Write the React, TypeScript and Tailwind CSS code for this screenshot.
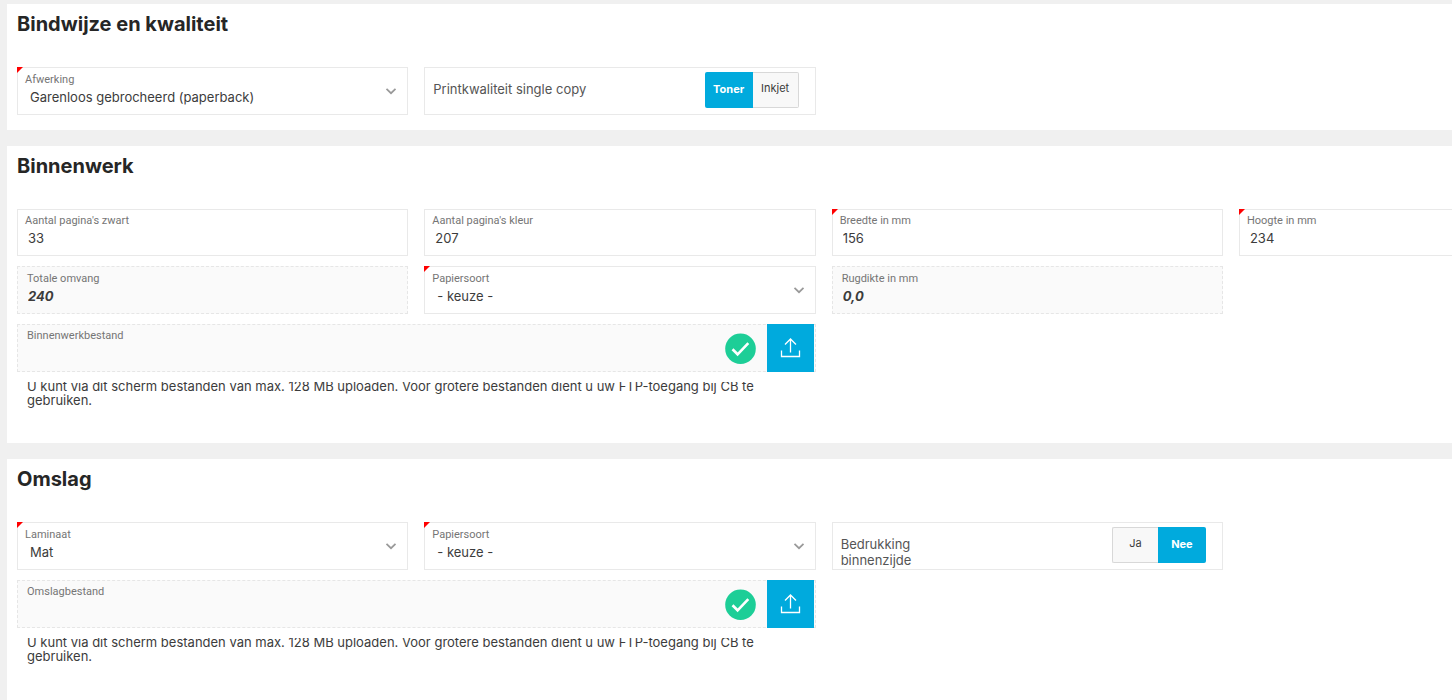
import { useId, useState } from "react"
import type { ReactNode } from "react"

const uploadHint =
  "U kunt via dit scherm bestanden van max. 128 MB uploaden. Voor grotere bestanden dient u uw FTP-toegang bij CB te gebruiken."

function RequiredMark() {
  return (
    <span className="absolute -left-px -top-px size-0 border-r-6 border-t-6 border-r-transparent border-t-[#ff0000]" />
  )
}

function Section({ title, children }: { title: string; children: ReactNode }) {
  return (
    <section className="overflow-hidden bg-white pb-[15px] pl-[10px] last:grow">
      <h2 className="h-[63px] pt-[6px] text-xl leading-7 font-bold text-[#262626]">{title}</h2>
      <div className="grid grid-cols-[repeat(4,27.27%)] items-start gap-x-4 gap-y-[10px]">
        {children}
      </div>
    </section>
  )
}

function TextField({ label, value, required }: { label: string; value: string; required?: boolean }) {
  const id = useId()
  return (
    <div className="relative flex h-[47px] flex-col border border-[#e9e9e9] pt-[3px]">
      {required && <RequiredMark />}
      <label htmlFor={id} className="pl-[7px] font-[Roboto,sans-serif] text-[11px] leading-4 text-[#757575]">
        {label}
      </label>
      <input
        id={id}
        defaultValue={value}
        className="w-full bg-transparent pl-[10px] text-[13px] leading-[18px] text-[#3c3c3c] outline-none"
      />
    </div>
  )
}

function ReadonlyField({ label, value }: { label: string; value: string }) {
  const id = useId()
  return (
    <div className="flex h-12 flex-col border border-dashed border-[#e6e6e6] bg-[#fafafa] pt-1">
      <label htmlFor={id} className="pl-[9px] font-[Roboto,sans-serif] text-[11px] leading-4 text-[#757575]">
        {label}
      </label>
      <input
        id={id}
        readOnly
        value={value}
        className="w-full bg-transparent pl-[10px] text-[13px] leading-[18px] font-bold text-[#3c3c3c] italic outline-none"
      />
    </div>
  )
}

function SelectField({ label, options }: { label: string; options: string[] }) {
  const id = useId()
  return (
    <div className="relative flex h-12 flex-col border border-[#e9e9e9] pt-1">
      <RequiredMark />
      <label htmlFor={id} className="pl-[7px] font-[Roboto,sans-serif] text-[11px] leading-4 text-[#757575]">
        {label}
      </label>
      <select
        id={id}
        className="w-full appearance-none bg-transparent pl-3 text-[13px] leading-[18px] text-[#3c3c3c] outline-none"
      >
        {options.map((option) => (
          <option key={option}>{option}</option>
        ))}
      </select>
      <svg
        viewBox="0 0 12 8"
        className="pointer-events-none absolute right-[10px] top-[19px] h-2 w-3 fill-none stroke-[#999]"
        strokeWidth="1.7"
      >
        <path d="M1.500 1.800 6 6.200l4.500-4.400" />
      </svg>
    </div>
  )
}

function ToggleField({ label, options, initial }: { label: string; options: string[]; initial: string }) {
  const [active, setActive] = useState(initial)
  const id = useId()
  return (
    <div className="flex h-12 items-start justify-between border border-[#e9e9e9] pt-1 pr-4 pl-2">
      <span id={id} className="pt-[9px] text-[13px] leading-4 whitespace-pre-line text-[#555]">
        {label}
      </span>
      <div role="group" aria-labelledby={id} className="flex h-9">
        {options.map((option) => (
          <button
            key={option}
            type="button"
            aria-pressed={active === option}
            onClick={() => setActive(option)}
            className={`text-[11px] first:rounded-l-[2px] last:rounded-r-[2px] ${
              active === option
                ? "w-12 bg-[#00aadd] pb-px font-bold text-white"
                : "w-[46px] border border-[#d8d8d8] bg-[#f8f8f8] pb-1 text-[#3c3c3c] first:border-r-0 last:border-l-0"
            }`}
          >
            {option}
          </button>
        ))}
      </div>
    </div>
  )
}

function FileField({ label }: { label: string }) {
  const id = useId()
  return (
    <div className="col-span-2">
      <div className="flex h-12 items-center border border-dashed border-[#e6e6e6] bg-[#fafafa] pr-px">
        <div className="flex flex-1 flex-col self-stretch pt-[3px]">
          <label htmlFor={id} className="pl-[9px] font-[Roboto,sans-serif] text-[11px] leading-4 text-[#757575]">
            {label}
          </label>
          <input id={id} readOnly className="w-full bg-transparent pl-[10px] text-[13px] leading-5 outline-none" />
        </div>
        <svg viewBox="0 0 31 31" className="mr-[11px] size-[31px]">
          <circle cx="15.500" cy="15.700" r="15.300" fill="#1dce97" />
          <path d="M7.500 16.300 12.600 21.300 23.300 10.200" fill="none" stroke="#fff" strokeWidth="2.600" />
        </svg>
        <button
          type="button"
          aria-label={`${label} uploaden`}
          className="flex h-12 w-[47px] items-center justify-center bg-[#00aadd]"
        >
          <svg viewBox="0 0 21 20" className="h-5 w-[21px] fill-none stroke-white" strokeWidth="1.300">
            <path d="M10.500 14.500V1M5 6.500 10.500 1 16 6.500M1.500 12.500v6h18v-6" />
          </svg>
        </button>
      </div>
      {/* the hint box cuts off the top of its first line */}
      <div className="mt-[10px] min-h-[46px] overflow-hidden px-[10px]">
        <p className="-mt-[3px] text-[13px] leading-[14px] text-[#3c3c3c]">{uploadHint}</p>
      </div>
    </div>
  )
}

export default function App() {
  return (
    <main className="flex min-h-screen flex-col gap-4 bg-[#f0f0f0] pt-1 pl-[7px] font-[Inter,sans-serif]">
      <Section title="Bindwijze en kwaliteit">
        <SelectField label="Afwerking" options={["Garenloos gebrocheerd (paperback)"]} />
        <ToggleField label="Printkwaliteit single copy" options={["Toner", "Inkjet"]} initial="Toner" />
      </Section>

      <Section title="Binnenwerk">
        <TextField label="Aantal pagina's zwart" value="33" />
        <TextField label="Aantal pagina's kleur" value="207" />
        <TextField label="Breedte in mm" value="156" required />
        <TextField label="Hoogte in mm" value="234" required />
        <ReadonlyField label="Totale omvang" value="240" />
        <SelectField label="Papiersoort" options={["- keuze -"]} />
        <ReadonlyField label="Rugdikte in mm" value="0,0" />
        <div />
        <FileField label="Binnenwerkbestand" />
      </Section>

      <Section title="Omslag">
        <SelectField label="Laminaat" options={["Mat"]} />
        <SelectField label="Papiersoort" options={["- keuze -"]} />
        <ToggleField label={"Bedrukking\nbinnenzijde"} options={["Ja", "Nee"]} initial="Nee" />
        <div />
        <FileField label="Omslagbestand" />
      </Section>
    </main>
  )
}
